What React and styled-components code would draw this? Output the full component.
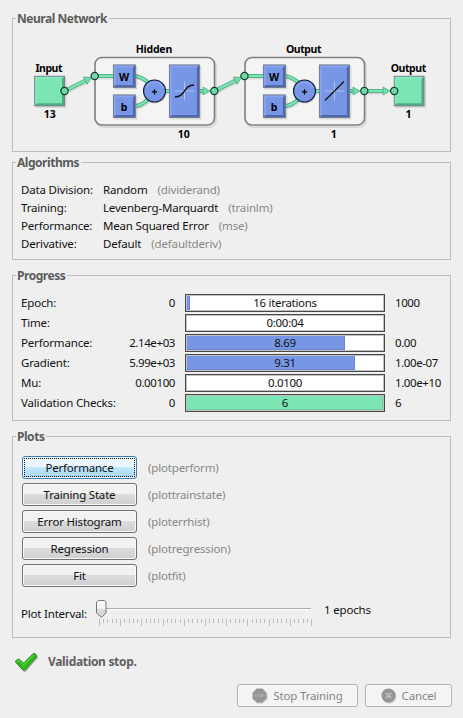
import React from 'react';
import styled, { createGlobalStyle, css } from 'styled-components';

const GlobalStyle = createGlobalStyle`
  * { box-sizing: border-box; }
  body {
    margin: 0;
    background: #efefef;
    font: 11.5px/18px "Noto Sans", "Open Sans", sans-serif;
    color: #111;
  }
`;

const Window = styled.main`
  width: 463px;
  height: 718px;
  padding: 18px 12px 0;
  background: #efefef;
  overflow: hidden;
`;

const Panel = styled.section`
  width: 439px;
  height: ${(p) => p.$height}px;
  margin-bottom: ${(p) => p.$gap}px;
  border: 1px solid #bcbcbc;
`;

const PanelTitle = styled.h2`
  width: fit-content;
  height: 16px;
  margin: -8px 0 0 3px;
  padding: 0 2px 0 1px;
  background: #efefef;
  color: #5c5c5c;
  font-size: 12px;
  font-weight: 700;
  line-height: 16px;
  letter-spacing: -0.46px;
  white-space: nowrap;
`;

const Text = styled.span`
  letter-spacing: ${(p) => p.$spacing ?? -0.17}px;
  white-space: nowrap;
  color: ${(p) => (p.$muted ? '#878787' : 'inherit')};
`;

const Diagram = styled.svg`
  display: block;
  margin-top: 3px;
  font: 700 10.5px "Noto Sans", "Open Sans", sans-serif;
`;

const AlgorithmList = styled.div`
  padding: 10px 0 0 8px;
`;

const AlgorithmRow = styled.div`
  display: grid;
  grid-template-columns: 82px max-content max-content;
  height: 18px;

  & > :last-child { margin-left: 10px; }
`;

const ProgressList = styled.div`
  display: grid;
  gap: 2px;
  padding: 10px 0 0 8px;
`;

const ProgressRow = styled.div`
  display: grid;
  grid-template-columns: 104px 50px 200px 56px;
  height: 18px;

  & > :nth-child(2) { text-align: right; }
  & > :nth-child(3) { margin-left: 10px; }
  & > :nth-child(4) { margin-left: 20px; }
`;

const Track = styled.div`
  display: grid;
  width: 200px;
  height: 18px;
  padding: 1px;
  border: 1px solid #484848;
  background: #fff;
  box-shadow: inset 0 0 0 1px #c2c2c2;
`;

const Fill = styled.div`
  grid-area: 1 / 1;
  width: ${(p) => p.$width}px;
  height: 14px;
  background: ${(p) => p.$color};
  box-shadow: inset -1px -1px 0 rgba(0, 0, 0, 0.1);
`;

const TrackText = styled.span`
  grid-area: 1 / 1;
  text-align: center;
  line-height: 14px;
  white-space: nowrap;
  letter-spacing: -0.3px;
`;

const PlotList = styled.div`
  display: grid;
  gap: 4px;
  padding: 11px 0 0 9px;
`;

const PlotRow = styled.div`
  display: flex;
  align-items: center;
  gap: 11px;
  height: 23px;
  line-height: 20px;
`;

const Button = styled.button`
  display: flex;
  align-items: center;
  justify-content: center;
  flex: none;
  width: ${(p) => p.$width}px;
  height: 23px;
  padding: 0;
  border: 1px solid #707070;
  border-radius: 3px;
  box-shadow: inset 0 0 0 1px #fafafa;
  background: linear-gradient(#f2f2f2 0 48%, #dcdcdc 50%, #cfcfcf);
  color: #111;
  font: inherit;

  ${(p) => p.$active && css`
    border-color: #3c7fb1;
    outline: 1px dotted #111;
    outline-offset: -3px;
    background: linear-gradient(#e9f6fd 0 48%, #bfe6fb 50%, #a8d9f3);
  `}

  &:disabled {
    border-color: #adb2b5;
    background: #f4f4f4;
    color: #858585;
    gap: 5px;
  }
`;

const IntervalRow = styled.div`
  display: grid;
  grid-template-columns: 74px 229px 60px;
  height: 32px;
  margin: 12px 0 0 8px;

  & > :first-child { padding-top: 6px; }
  & > :last-child { padding-top: 2px; }
`;

const Status = styled.div`
  display: flex;
  align-items: center;
  height: 24px;
  gap: 9px;
  padding-left: 2px;
  color: #606060;
  font-size: 12px;
  font-weight: 700;
`;

const Actions = styled.footer`
  display: flex;
  justify-content: flex-end;
  gap: 7px;
  margin: 10px -1px 0 0;
`;

const BLUE = '#7896e6';
const GREEN = '#7be6b4';

const algorithms = [
  ['Data Division:', 'Random', '(dividerand)'],
  ['Training:', 'Levenberg-Marquardt', '(trainlm)'],
  ['Performance:', 'Mean Squared Error', '(mse)'],
  ['Derivative:', 'Default', '(defaultderiv)'],
];

const progress = [
  ['Epoch:', '0', 3, BLUE, '16 iterations', '1000'],
  ['Time:', '', 0, BLUE, '0:00:04', ''],
  ['Performance:', '2.14e+03', 158, BLUE, '8.69', '0.00'],
  ['Gradient:', '5.99e+03', 168, BLUE, '9.31', '1.00e-07'],
  ['Mu:', '0.00100', 0, BLUE, '0.0100', '1.00e+10'],
  ['Validation Checks:', '0', 196, GREEN, '6', '6'],
];

const plots = [
  ['Performance', '(plotperform)'],
  ['Training State', '(plottrainstate)'],
  ['Error Histogram', '(ploterrhist)'],
  ['Regression', '(plotregression)'],
  ['Fit', '(plotfit)'],
];

function Block({ x, y, w, h, green }) {
  const [base, light, dark] = green
    ? [GREEN, '#85ebbc', '#50ad82']
    : [BLUE, '#86a3ee', '#5068ae'];
  const x2 = x + w;
  const y2 = y + h;
  return (
    <g>
      <rect x={x + 1} y={y + 1} width={w + 1} height={h + 1} fill="#000" opacity=".12" />
      <rect x={x} y={y} width={w} height={h} fill={base} />
      <path d={`M${x} ${y}H${x2}l-2.5 2.5H${x + 2.5}V${y2 - 2.5}l-2.5 2.5Z`} fill={light} />
      <path d={`M${x2} ${y}V${y2}H${x}l2.5-2.5H${x2 - 2.5}V${y + 2.5}Z`} fill={dark} />
      <rect x={x} y={y} width={w} height={h} fill="none" stroke="#737b88" strokeWidth=".9" />
    </g>
  );
}

function Port({ x, y }) {
  return <circle cx={x} cy={y} r="3.6" fill="#70d9a9" stroke="#173c2c" strokeWidth="1.2" />;
}

function Link({ d }) {
  return (
    <g fill="none">
      <path d={d} stroke="#000" opacity=".1" strokeWidth="4" transform="translate(1 1.5)" />
      <path d={d} stroke="#4fae85" strokeWidth="4" />
      <path d={d} stroke={GREEN} strokeWidth="2.2" />
    </g>
  );
}

function Arrow({ x, y, angle = 0 }) {
  return (
    <path
      d="M-7-4L0 0L-7 4Z"
      transform={`translate(${x} ${y}) rotate(${angle})`}
      fill="#70dcaa"
      stroke="#4fae85"
      strokeWidth=".8"
    />
  );
}

function Layer({ x, linear }) {
  return (
    <g transform={`translate(${x} 0)`}>
      <rect x="1.5" y="59" width="120" height="68" rx="7" fill="none" stroke="#d2d2d2" strokeWidth="1.6" />
      <rect x="0.5" y="57.5" width="119.5" height="67.5" rx="7" fill="#f4f4f4" stroke="#808080" strokeWidth="1.6" />
      <Link d="M0 76H20" />
      <Link d="M41 76Q48 77 54 83" />
      <Link d="M41 106Q48 105 54 99" />
      <Link d="M68 91H76" />
      <Link d="M105 91H110" />
      <Arrow x={115.5} y={91} />
      <Block x={18.9} y={64.9} w={22} h={22.5} />
      <Block x={18.9} y={94.9} w={22} h={22.5} />
      <circle cx="60.7" cy="92" r="11.5" fill="#000" opacity=".12" />
      <circle cx="60" cy="91" r="11" fill={BLUE} stroke="#111a33" strokeWidth="1.1" />
      <path d="M52 88A8.5 8.5 0 0 1 68 88" fill="none" stroke="#86a3ee" strokeWidth="2" />
      <path d="M57.4 91.8H62.6M60 89.2V94.4" stroke="#000" strokeWidth="1.2" />
      <Block x={74.9} y={64.9} w={30} h={52.5} />
      <path d="M80.5 91H99.5M90 81.5V100.5" stroke="#b3c3ee" strokeWidth="1" />
      <path
        d={linear ? 'M80.5 100.5L99.5 81.5' : 'M80.5 97C91 97 89 85 99.5 85'}
        fill="none"
        stroke="#111"
        strokeWidth="1.3"
      />
      <text x="29.5" y="80.5">W</text>
      <text x="29.5" y="110.5">b</text>
    </g>
  );
}

function NetworkDiagram() {
  return (
    <Diagram width="437" height="118" viewBox="13 30 437 118" textAnchor="middle">
      <Block x={34.7} y={76.2} w={29.8} h={29.6} green />
      <Block x={394.2} y={76.2} w={29.8} h={29.6} green />
      <Layer x={94.5} />
      <Layer x={244.5} linear />
      <Link d="M64.5 91L86 80.2" />
      <Link d="M214.5 91L236 80.2" />
      <Link d="M364.5 91H384" />
      <Arrow x={91.5} y={77.5} angle={-26.5} />
      <Arrow x={241.5} y={77.5} angle={-26.5} />
      <Arrow x={390} y={91} />
      {[64.5, 214.3, 364.3, 394.2].map((x) => <Port key={x} x={x} y={91} />)}
      <Port x={94.7} y={76} />
      <Port x={244.5} y={76} />
      <text x="49" y="71.5" textLength="27">Input</text>
      <text x="49.8" y="117.5" textLength="12">13</text>
      <text x="154" y="52.5" textLength="36.5">Hidden</text>
      <text x="183.7" y="137.5" textLength="12">10</text>
      <text x="303.7" y="52.5" textLength="35.5">Output</text>
      <text x="333.7" y="137.5">1</text>
      <text x="408.5" y="71.5" textLength="35.5">Output</text>
      <text x="408.5" y="117.5">1</text>
    </Diagram>
  );
}

function Slider() {
  return (
    <svg width="228" height="32" viewBox="95 599 228 32" shapeRendering="crispEdges">
      <path d="M99 608.5H311" stroke="#aaa" />
      <path d="M99 609.5H312" stroke="#fff" />
      {Array.from({ length: 51 }, (_, i) => (
        <path
          key={i}
          d={`M${Math.round(99 + i * 4.24) + 0.5} 619v${i % 5 ? 4 : 7}`}
          stroke="#bdbdbd"
        />
      ))}
      <path
        d="M98.5 600.5H104.5L106 602V613L101.5 617.3L96.5 613V602Z"
        fill="url(#thumb)"
        stroke="#777"
        shapeRendering="auto"
      />
      <defs>
        <linearGradient id="thumb" x2="0" y2="1">
          <stop offset=".45" stopColor="#f7f7f7" />
          <stop offset=".55" stopColor="#d8d8d8" />
        </linearGradient>
      </defs>
    </svg>
  );
}

function CheckIcon() {
  return (
    <svg width="25" height="21" viewBox="0 0 25 21">
      <path d="M2 11L6 7.5L10 11.5L19.5 2L23.5 4.5L11 19H9Z" fill="#777" opacity=".6" transform="translate(.8 .8)" />
      <path
        d="M1.4 10Q1 9 2.3 8.2L4.4 7.2Q5.4 7 6 7.8L9.5 11.3L18.8 1.8Q20 .8 21 1.7L22.6 3.2Q23.3 4 22.4 5L11.3 17.6Q9.8 19 8.4 17.6Z"
        fill="#2fb71d"
        stroke="#20851a"
        strokeWidth=".8"
      />
      <path d="M3 9.3L5 8.5L9.5 13L20 2.6" fill="none" stroke="#6fe052" strokeWidth="1" />
    </svg>
  );
}

function StopIcon() {
  return (
    <svg width="16" height="16" viewBox="0 0 16 16">
      <path d="M5.2 1.5H11L15.6 6V11.2L11 15.5H5.2L1 11.2V6Z" fill="#ccc" />
      <path d="M4.7 .5H10.3L14.5 4.7V10.3L10.3 14.5H4.7L.5 10.3V4.7Z" fill="#969696" />
      <text x="7.5" y="9" textAnchor="middle" fontSize="4" fontWeight="700" fill="#b4b4b4">STOP</text>
    </svg>
  );
}

function CancelIcon() {
  return (
    <svg width="16" height="16" viewBox="0 0 16 16">
      <circle cx="8.2" cy="8.5" r="7.2" fill="#ccc" />
      <circle cx="7.5" cy="7.5" r="7" fill="#949494" />
      <path d="M5 5L10 10M10 5L5 10" stroke="#b9b9b9" strokeWidth="2.4" />
    </svg>
  );
}

export default function App() {
  return (
    <>
      <GlobalStyle />
      <Window>
        <Panel $height={134} $gap={10}>
          <PanelTitle>Neural Network</PanelTitle>
          <NetworkDiagram />
        </Panel>

        <Panel $height={98} $gap={15}>
          <PanelTitle>Algorithms</PanelTitle>
          <AlgorithmList>
            {algorithms.map(([label, name, fn]) => (
              <AlgorithmRow key={label}>
                <Text>{label}</Text>
                <Text>{name}</Text>
                <Text $muted>{fn}</Text>
              </AlgorithmRow>
            ))}
          </AlgorithmList>
        </Panel>

        <Panel $height={146} $gap={15}>
          <PanelTitle>Progress</PanelTitle>
          <ProgressList>
            {progress.map(([label, start, width, color, value, end]) => (
              <ProgressRow key={label}>
                <Text>{label}</Text>
                <Text $spacing={-0.4}>{start}</Text>
                <Track>
                  <Fill $width={width} $color={color} />
                  <TrackText>{value}</TrackText>
                </Track>
                <Text $spacing={-0.4}>{end}</Text>
              </ProgressRow>
            ))}
          </ProgressList>
        </Panel>

        <Panel $height={202} $gap={12}>
          <PanelTitle>Plots</PanelTitle>
          <PlotList>
            {plots.map(([label, fn], i) => (
              <PlotRow key={label}>
                <Button $width={115} $active={i === 0}><Text $spacing={-0.2}>{label}</Text></Button>
                <Text $muted>{fn}</Text>
              </PlotRow>
            ))}
          </PlotList>
          <IntervalRow>
            <Text $spacing={-0.2}>Plot Interval:</Text>
            <Slider />
            <Text>1 epochs</Text>
          </IntervalRow>
        </Panel>

        <Status>
          <CheckIcon />
          <Text $spacing={-0.32}>Validation stop.</Text>
        </Status>
        <Actions>
          <Button $width={121} disabled><StopIcon /><Text>Stop Training</Text></Button>
          <Button $width={87} disabled><CancelIcon /><Text>Cancel</Text></Button>
        </Actions>
      </Window>
    </>
  );
}
